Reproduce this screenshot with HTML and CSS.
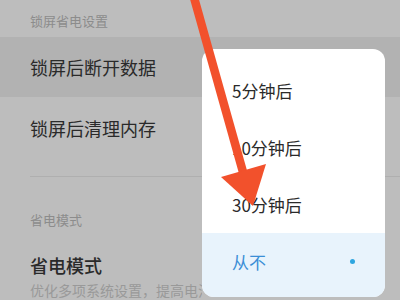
FILE: index.html
```html
<!DOCTYPE html>
<html lang="zh-CN">
<head>
    <meta charset="UTF-8">
    <meta name="viewport" content="width=device-width, initial-scale=1.0">
    <title>锁屏省电设置</title>
    <link rel="stylesheet" href="styles.css">
</head>
<body>
    <div class="settings">
        <div class="group-title">锁屏省电设置</div>
        <div class="row pressed">锁屏后断开数据</div>
        <div class="row">锁屏后清理内存</div>
        <div class="divider"></div>
        <div class="group-title second">省电模式</div>
        <div class="item">
            <div class="item-title">省电模式</div>
            <div class="item-desc">优化多项系统设置，提高电池续航时间</div>
        </div>
    </div>

    <div class="popup">
        <div class="option">5分钟后</div>
        <div class="option">10分钟后</div>
        <div class="option">30分钟后</div>
        <div class="option selected">从不<span class="dot"></span></div>
    </div>

    <svg class="arrow" width="400" height="300" viewBox="0 0 400 300">
        <line x1="193" y1="-6" x2="243" y2="172" stroke="#f2512c" stroke-width="8.5"/>
        <polygon points="221,177 266,164 253,206" fill="#f2512c"/>
    </svg>
</body>
</html>
```

FILE: styles.css
```css
body {
    margin: 0;
    width: 400px;
    height: 300px;
    overflow: hidden;
    position: relative;
    background-color: #bdbdbd;
    font-family: "Noto Sans CJK SC", "Noto Sans", sans-serif;
}
.group-title {
    height: 37px;
    box-sizing: border-box;
    padding: 11px 0 0 30px;
    font-size: 13px;
    line-height: 19px;
    color: #8c8c8c;
}
.group-title.second {
    height: 66px;
    padding-top: 33px;
}
.row {
    height: 61px;
    padding-left: 30px;
    display: flex;
    align-items: center;
    font-size: 18px;
    color: #2a2a2a;
}
.row.pressed {
    height: 60px;
    background-color: #b2b2b2;
}
.divider {
    height: 1px;
    margin: 18px 0 0 30px;
    background-color: #afafaf;
}
.item {
    padding: 10px 0 0 30px;
}
.item-title {
    font-size: 18px;
    line-height: 25px;
    font-weight: 500;
    color: #2a2a2a;
}
.item-desc {
    width: 172px;
    overflow: hidden;
    font-size: 14px;
    line-height: 24px;
    color: #999999;
    white-space: nowrap;
}
.popup {
    position: absolute;
    left: 202px;
    top: 49px;
    width: 183px;
    height: 248px;
    padding-top: 13px;
    box-sizing: border-box;
    background-color: #ffffff;
    border-radius: 12px;
    overflow: hidden;
}
.option {
    height: 57px;
    padding-left: 30px;
    display: flex;
    align-items: center;
    font-size: 17px;
    color: #2a2a2a;
}
.option.selected {
    height: 64px;
    padding-bottom: 7px;
    box-sizing: border-box;
    justify-content: space-between;
    padding-right: 30px;
    background-color: #e8f3fc;
    color: #3b8ed6;
}
.dot {
    width: 5px;
    height: 5px;
    border-radius: 50%;
    background-color: #2fa6e0;
}
.arrow {
    position: absolute;
    left: 0;
    top: 0;
}
```
